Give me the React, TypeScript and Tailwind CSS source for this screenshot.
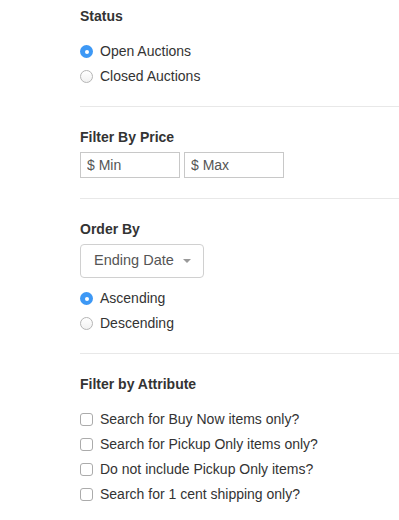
import React, { useState } from 'react';

const Radio: React.FC<{ checked: boolean; label: string; onClick: () => void }> = ({ checked, label, onClick }) => (
  <div className="flex items-center h-[25px] cursor-pointer" onClick={onClick}>
    {checked ? (
      <span className="w-[13px] h-[13px] rounded-full bg-[#3d98f5] flex items-center justify-center">
        <span className="w-[4px] h-[4px] rounded-full bg-white" />
      </span>
    ) : (
      <span className="w-[13px] h-[13px] rounded-full border border-[#b5b5b5] bg-gradient-to-b from-white to-[#f1f1f1]" />
    )}
    <span className="ml-[7px] text-[14px] text-[#333]">{label}</span>
  </div>
);

const Check: React.FC<{ label: string }> = ({ label }) => (
  <label className="flex items-center h-[25px]">
    <span className="w-[13px] h-[13px] rounded-[3px] border border-[#ababab] bg-white" />
    <span className="ml-[7px] text-[14px] text-[#333]">{label}</span>
  </label>
);

const Heading: React.FC<{ children: React.ReactNode }> = ({ children }) => (
  <h3 className="h-5 leading-5 text-[14px] font-bold text-[#333]">{children}</h3>
);

const App: React.FC = () => {
  const [status, setStatus] = useState('open');
  const [order, setOrder] = useState('asc');

  return (
    <div className="w-[399px] h-[520px] bg-white pl-[80px] overflow-hidden" style={{ fontFamily: '"Liberation Sans", Arial, sans-serif' }}>
      {/* Status */}
      <div className="pt-[6px] pb-[17px] border-b border-[#e8e8e8]">
        <Heading>Status</Heading>
        <div className="mt-[13px]">
          <Radio checked={status === 'open'} label="Open Auctions" onClick={() => setStatus('open')} />
          <Radio checked={status === 'closed'} label="Closed Auctions" onClick={() => setStatus('closed')} />
        </div>
      </div>

      {/* Price */}
      <div className="pt-[20px] pb-[20px] border-b border-[#e8e8e8]">
        <Heading>Filter By Price</Heading>
        <div className="mt-[5px] flex gap-[4px]">
          <input className="w-[100px] h-[26px] border border-[#c8c8c8] px-[6px] text-[14px] text-[#555] placeholder:text-[#555] outline-none" placeholder="$ Min" />
          <input className="w-[100px] h-[26px] border border-[#c8c8c8] px-[6px] text-[14px] text-[#555] placeholder:text-[#555] outline-none" placeholder="$ Max" />
        </div>
      </div>

      {/* Order */}
      <div className="pt-[20px] pb-[17px] border-b border-[#e8e8e8]">
        <Heading>Order By</Heading>
        <div className="mt-[5px] w-[124px] h-[34px] border border-[#d0d0d0] rounded-[4px] flex items-center justify-between pl-[13px] pr-[12px]">
          <span className="text-[14.5px] text-[#555]">Ending Date</span>
          <span className="w-0 h-0 border-l-[4px] border-r-[4px] border-t-[4px] border-l-transparent border-r-transparent border-t-[#999]" />
        </div>
        <div className="mt-[8px]">
          <Radio checked={order === 'asc'} label="Ascending" onClick={() => setOrder('asc')} />
          <Radio checked={order === 'desc'} label="Descending" onClick={() => setOrder('desc')} />
        </div>
      </div>

      {/* Attribute */}
      <div className="pt-[20px]">
        <Heading>Filter by Attribute</Heading>
        <div className="mt-[13px]">
          <Check label="Search for Buy Now items only?" />
          <Check label="Search for Pickup Only items only?" />
          <Check label="Do not include Pickup Only items?" />
          <Check label="Search for 1 cent shipping only?" />
        </div>
      </div>
    </div>
  );
};

export default App;
